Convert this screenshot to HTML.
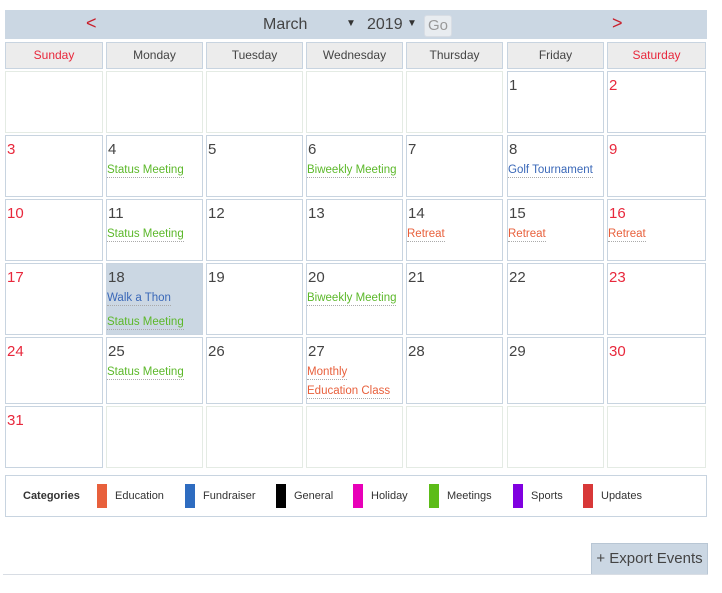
<!DOCTYPE html>
<html><head><style>
*{margin:0;padding:0;box-sizing:border-box}
body{width:722px;height:593px;background:#fff;font-family:"Liberation Sans",sans-serif;position:relative;overflow:hidden;color:#444}
.a{position:absolute}
.hdr{left:5px;top:10px;width:702px;height:29px;background:#cbd7e3}
.wd{position:absolute;top:42px;height:27px;background:#ececec;border:1px solid #c8d4e0;font-size:12px;text-align:center;line-height:25px;color:#444}
.c{position:absolute;border:1px solid #c8d4e0;background:#fff}
.e{border-color:#e4ebe4}
.n{font-size:15px;color:#444;padding-left:1px;line-height:18px;margin-top:5px}
.r{color:#e8283c}
.ev{font-size:11.5px;display:inline-block;border-bottom:1px dotted #aaa;line-height:14px;margin-top:4px}
.g{color:#5cb82a}.b{color:#3a68b8}.o{color:#e8603c}
.lg{font-size:11px;color:#333;position:absolute;top:490px}
.sw{position:absolute;top:484px;width:10px;height:24px}
</style></head><body>
<div class="a hdr"></div>
<div class="a" style="left:86px;top:13px;font-size:18px;color:#c8202c">&lt;</div>
<div class="a" style="left:612px;top:13px;font-size:18px;color:#c8202c">&gt;</div>
<div class="a" style="left:263px;top:16px;font-size:16px;color:#444">March</div>
<div class="a" style="left:346px;top:18px;font-size:10px;color:#333">▼</div>
<div class="a" style="left:367px;top:16px;font-size:16px;color:#444">2019</div>
<div class="a" style="left:407px;top:18px;font-size:10px;color:#333">▼</div>
<div class="a" style="left:424px;top:15px;width:28px;height:22px;border:1px solid #d8dde4;border-radius:3px;background:#e8ecf0;color:#999;font-size:15px;text-align:center;line-height:20px">Go</div>

<div class="wd r" style="left:5px;width:98px;color:#e8283c">Sunday</div>
<div class="wd" style="left:106px;width:97px">Monday</div>
<div class="wd" style="left:206px;width:97px">Tuesday</div>
<div class="wd" style="left:306px;width:97px">Wednesday</div>
<div class="wd" style="left:406px;width:97px">Thursday</div>
<div class="wd" style="left:507px;width:97px">Friday</div>
<div class="wd" style="left:607px;width:99px;color:#e8283c">Saturday</div>

<!-- row1 -->
<div class="c e" style="left:5px;top:71px;width:98px;height:62px"></div>
<div class="c e" style="left:106px;top:71px;width:97px;height:62px"></div>
<div class="c e" style="left:206px;top:71px;width:97px;height:62px"></div>
<div class="c e" style="left:306px;top:71px;width:97px;height:62px"></div>
<div class="c e" style="left:406px;top:71px;width:97px;height:62px"></div>
<div class="c" style="left:507px;top:71px;width:97px;height:62px"><div class="n">1</div></div>
<div class="c" style="left:607px;top:71px;width:99px;height:62px"><div class="n r">2</div></div>
<!-- row2 -->
<div class="c" style="left:5px;top:135px;width:98px;height:62px"><div class="n r">3</div></div>
<div class="c" style="left:106px;top:135px;width:97px;height:62px"><div class="n">4</div><span class="ev g">Status Meeting</span></div>
<div class="c" style="left:206px;top:135px;width:97px;height:62px"><div class="n">5</div></div>
<div class="c" style="left:306px;top:135px;width:97px;height:62px"><div class="n">6</div><span class="ev g">Biweekly Meeting</span></div>
<div class="c" style="left:406px;top:135px;width:97px;height:62px"><div class="n">7</div></div>
<div class="c" style="left:507px;top:135px;width:97px;height:62px"><div class="n">8</div><span class="ev b">Golf Tournament</span></div>
<div class="c" style="left:607px;top:135px;width:99px;height:62px"><div class="n r">9</div></div>
<!-- row3 -->
<div class="c" style="left:5px;top:199px;width:98px;height:62px"><div class="n r">10</div></div>
<div class="c" style="left:106px;top:199px;width:97px;height:62px"><div class="n">11</div><span class="ev g">Status Meeting</span></div>
<div class="c" style="left:206px;top:199px;width:97px;height:62px"><div class="n">12</div></div>
<div class="c" style="left:306px;top:199px;width:97px;height:62px"><div class="n">13</div></div>
<div class="c" style="left:406px;top:199px;width:97px;height:62px"><div class="n">14</div><span class="ev o">Retreat</span></div>
<div class="c" style="left:507px;top:199px;width:97px;height:62px"><div class="n">15</div><span class="ev o">Retreat</span></div>
<div class="c" style="left:607px;top:199px;width:99px;height:62px"><div class="n r">16</div><span class="ev o">Retreat</span></div>
<!-- row4 -->
<div class="c" style="left:5px;top:263px;width:98px;height:72px"><div class="n r">17</div></div>
<div class="c" style="left:106px;top:263px;width:97px;height:72px;background:#cbd7e3"><div class="n">18</div><span class="ev b">Walk a Thon</span><br><span class="ev g" style="margin-top:9px">Status Meeting</span></div>
<div class="c" style="left:206px;top:263px;width:97px;height:72px"><div class="n">19</div></div>
<div class="c" style="left:306px;top:263px;width:97px;height:72px"><div class="n">20</div><span class="ev g">Biweekly Meeting</span></div>
<div class="c" style="left:406px;top:263px;width:97px;height:72px"><div class="n">21</div></div>
<div class="c" style="left:507px;top:263px;width:97px;height:72px"><div class="n">22</div></div>
<div class="c" style="left:607px;top:263px;width:99px;height:72px"><div class="n r">23</div></div>
<!-- row5 -->
<div class="c" style="left:5px;top:337px;width:98px;height:67px"><div class="n r">24</div></div>
<div class="c" style="left:106px;top:337px;width:97px;height:67px"><div class="n">25</div><span class="ev g">Status Meeting</span></div>
<div class="c" style="left:206px;top:337px;width:97px;height:67px"><div class="n">26</div></div>
<div class="c" style="left:306px;top:337px;width:97px;height:67px"><div class="n">27</div><span class="ev o">Monthly</span><br><span class="ev o">Education Class</span></div>
<div class="c" style="left:406px;top:337px;width:97px;height:67px"><div class="n">28</div></div>
<div class="c" style="left:507px;top:337px;width:97px;height:67px"><div class="n">29</div></div>
<div class="c" style="left:607px;top:337px;width:99px;height:67px"><div class="n r">30</div></div>
<!-- row6 -->
<div class="c" style="left:5px;top:406px;width:98px;height:62px"><div class="n r">31</div></div>
<div class="c e" style="left:106px;top:406px;width:97px;height:62px"></div>
<div class="c e" style="left:206px;top:406px;width:97px;height:62px"></div>
<div class="c e" style="left:306px;top:406px;width:97px;height:62px"></div>
<div class="c e" style="left:406px;top:406px;width:97px;height:62px"></div>
<div class="c e" style="left:507px;top:406px;width:97px;height:62px"></div>
<div class="c e" style="left:607px;top:406px;width:99px;height:62px"></div>

<div class="a" style="left:5px;top:475px;width:702px;height:42px;border:1px solid #c8d4e0"></div>
<div class="lg" style="left:23px;font-weight:bold;color:#333">Categories</div>
<div class="sw" style="left:97px;background:#e8603c"></div><div class="lg" style="left:115px">Education</div>
<div class="sw" style="left:185px;background:#2e6cc0"></div><div class="lg" style="left:203px">Fundraiser</div>
<div class="sw" style="left:276px;background:#000"></div><div class="lg" style="left:294px">General</div>
<div class="sw" style="left:353px;background:#e800b8"></div><div class="lg" style="left:371px">Holiday</div>
<div class="sw" style="left:429px;background:#5cbc18"></div><div class="lg" style="left:447px">Meetings</div>
<div class="sw" style="left:513px;background:#8000e0"></div><div class="lg" style="left:531px">Sports</div>
<div class="sw" style="left:583px;background:#d83838"></div><div class="lg" style="left:601px">Updates</div>

<div class="a" style="left:591px;top:543px;width:117px;height:32px;background:#cbd7e3;border:1px solid #b8c6d4;font-size:15px;color:#444;line-height:30px;text-align:center">+ Export Events</div>
<div class="a" style="left:3px;top:574px;width:705px;height:1px;background:#d8dde4"></div>
</body></html>
